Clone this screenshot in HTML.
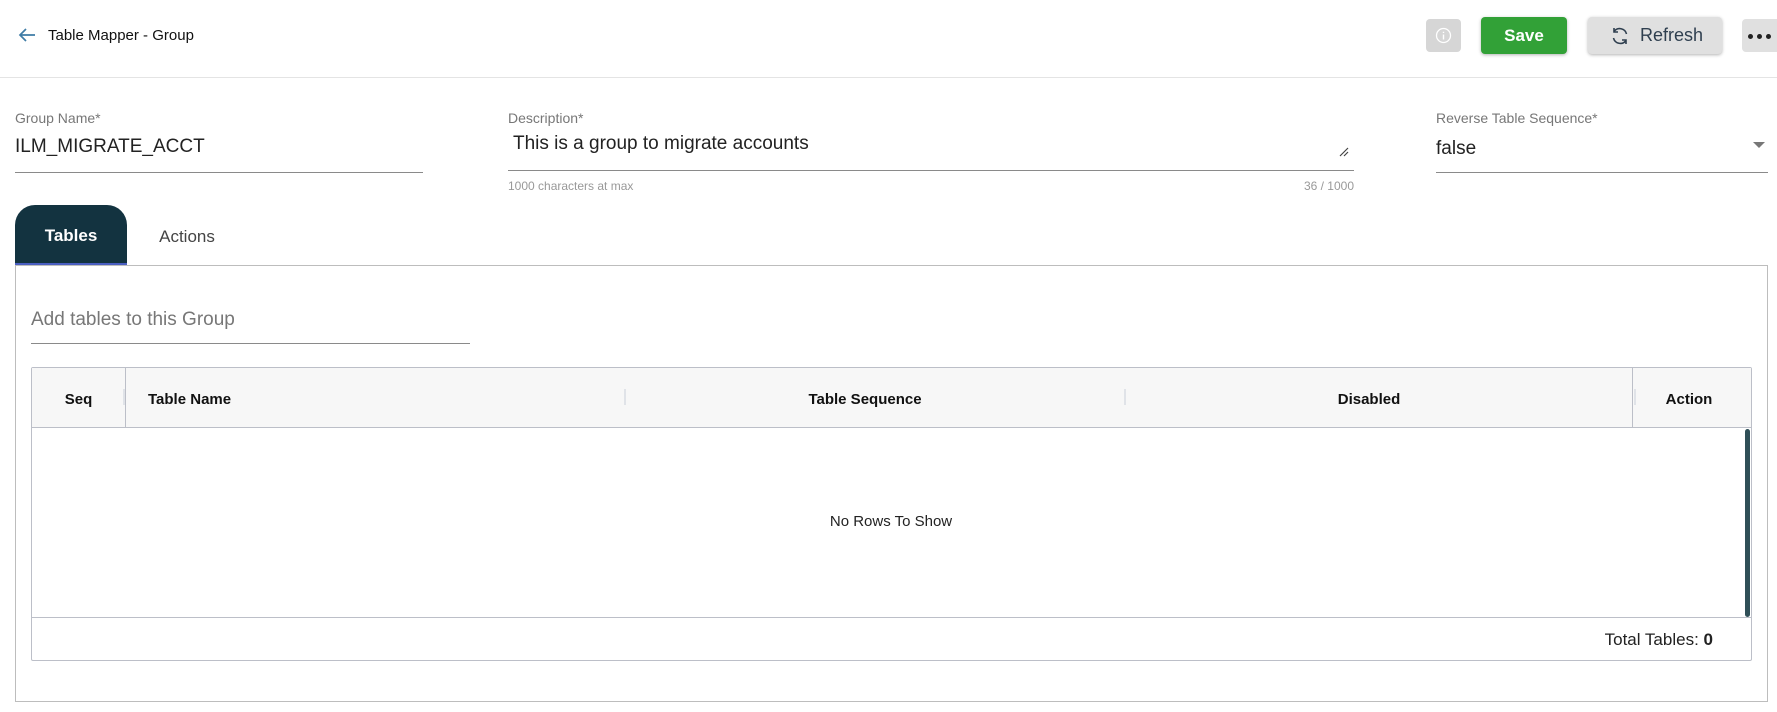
<!DOCTYPE html>
<html><head><meta charset="utf-8"><style>
*{box-sizing:border-box;margin:0;padding:0}
body{width:1777px;height:712px;background:#fff;font-family:"Liberation Sans",sans-serif;position:relative;overflow:hidden;color:#222}
.a{position:absolute;white-space:nowrap}
.lbl{font-size:14px;color:#777}
.val{font-size:19px;color:#222}
.ul{position:absolute;height:1px;background:#8a8a8a}
.th{position:absolute;top:369px;height:61px;line-height:61px;font-size:15px;font-weight:bold;color:#111}
.hd{position:absolute;top:389px;width:2px;height:16px;background:#e0e3e8}
</style></head><body>
<svg class="a" style="left:17px;top:27px" width="20" height="16" viewBox="0 0 20 16"><path d="M18 8H3M9 2L3 8l6 6" fill="none" stroke="#3f7ca6" stroke-width="1.7"/></svg>
<div class="a" style="left:48px;top:27px;font-size:15px;font-weight:500;color:#111">Table Mapper - Group</div>

<div class="a" style="left:1426px;top:19px;width:35px;height:33px;background:#d6d6d6;border-radius:4px"></div>
<svg class="a" style="left:1435px;top:27px" width="17" height="17" viewBox="0 0 17 17"><circle cx="8.5" cy="8.5" r="7" fill="none" stroke="#fff" stroke-width="1.3"/><path d="M8.5 7.5v5M8.5 4.8v1.2" stroke="#fff" stroke-width="1.4"/></svg>
<div class="a" style="left:1481px;top:17px;width:86px;height:37px;background:#32a137;border-radius:4px;color:#fff;font-weight:bold;font-size:17px;text-align:center;line-height:37px;box-shadow:0 1px 3px rgba(0,0,0,.3)">Save</div>
<div class="a" style="left:1588px;top:17px;width:134px;height:37px;background:#e0e0e0;border-radius:4px;color:#2f3f4f;font-size:18px;line-height:37px;padding-left:52px;box-shadow:0 1px 3px rgba(0,0,0,.3)">Refresh</div>
<svg class="a" style="left:1610px;top:26px" width="20" height="20" viewBox="0 0 20 20"><path d="M16.5 8A7 7 0 0 0 4 5.5M3.5 12A7 7 0 0 0 16 14.5" fill="none" stroke="#2f3f4f" stroke-width="1.6"/><path d="M4 2v4h4M16 18v-4h-4" fill="none" stroke="#2f3f4f" stroke-width="1.6"/></svg>
<div class="a" style="left:1742px;top:19px;width:40px;height:33px;background:#e0e0e0;border-radius:4px"></div>
<div class="a" style="left:1748px;top:34px;width:5px;height:5px;border-radius:3px;background:#222;box-shadow:9px 0 0 #222,18px 0 0 #222"></div>

<div class="a" style="left:0;top:77px;width:1777px;height:1px;background:#e4e4e4"></div>

<div class="a lbl" style="left:15px;top:110px">Group Name*</div>
<div class="a val" style="left:15px;top:136px">ILM_MIGRATE_ACCT</div>
<div class="ul" style="left:15px;top:172px;width:408px"></div>

<div class="a lbl" style="left:508px;top:110px">Description*</div>
<div class="a val" style="left:513px;top:133px">This is a group to migrate accounts</div>
<svg class="a" style="left:1338px;top:146px" width="12" height="12" viewBox="0 0 12 12"><path d="M2 10L10 2M6 10l4-4" stroke="#444" stroke-width="1.2"/></svg>
<div class="ul" style="left:508px;top:170px;width:846px"></div>
<div class="a" style="left:508px;top:179px;font-size:12px;color:#999">1000 characters at max</div>
<div class="a" style="left:1254px;top:179px;width:100px;text-align:right;font-size:12px;color:#999">36 / 1000</div>

<div class="a lbl" style="left:1436px;top:110px">Reverse Table Sequence*</div>
<div class="a val" style="left:1436px;top:138px">false</div>
<div class="a" style="left:1753px;top:142px;border-left:6px solid transparent;border-right:6px solid transparent;border-top:6px solid #777"></div>
<div class="ul" style="left:1436px;top:172px;width:332px"></div>

<div class="a" style="left:15px;top:205px;width:112px;height:60px;background:#133340;border-radius:20px 20px 0 0;border-bottom:2px solid #4a5fc1;color:#fff;font-weight:bold;font-size:17px;text-align:center;line-height:62px">Tables</div>
<div class="a" style="left:127px;top:205px;width:120px;height:58px;text-align:center;line-height:63px;font-size:17px;color:#444">Actions</div>

<div class="a" style="left:15px;top:265px;width:1753px;height:437px;border:1px solid #bdbdbd"></div>

<div class="a" style="left:31px;top:309px;font-size:19px;color:#777">Add tables to this Group</div>
<div class="ul" style="left:31px;top:343px;width:439px"></div>

<div class="a" style="left:31px;top:367px;width:1721px;height:294px;border:1px solid #bcbfc8;border-radius:2px"></div>
<div class="a" style="left:32px;top:368px;width:1719px;height:60px;background:#f7f7f7;border-bottom:1px solid #bcbfc8"></div>
<div class="a" style="left:125px;top:368px;width:1px;height:60px;background:#bcbfc8"></div>
<div class="a" style="left:1632px;top:368px;width:1px;height:60px;background:#bcbfc8"></div>
<div class="hd" style="left:123px"></div><div class="hd" style="left:624px"></div><div class="hd" style="left:1124px"></div><div class="hd" style="left:1634px"></div>
<div class="th" style="left:32px;width:93px;text-align:center">Seq</div>
<div class="th" style="left:148px">Table Name</div>
<div class="th" style="left:765px;width:200px;text-align:center">Table Sequence</div>
<div class="th" style="left:1269px;width:200px;text-align:center">Disabled</div>
<div class="th" style="left:1632px;width:114px;text-align:center">Action</div>
<div class="a" style="left:791px;top:513px;width:200px;text-align:center;font-size:15px;color:#222">No Rows To Show</div>
<div class="a" style="left:1745px;top:429px;width:5px;height:188px;background:#2f4f57;border-radius:3px"></div>
<div class="a" style="left:32px;top:617px;width:1719px;height:1px;background:#bcbfc8"></div>
<div class="a" style="left:1513px;top:630px;width:200px;text-align:right;font-size:17px;color:#222">Total Tables: <b>0</b></div>
</body></html>
